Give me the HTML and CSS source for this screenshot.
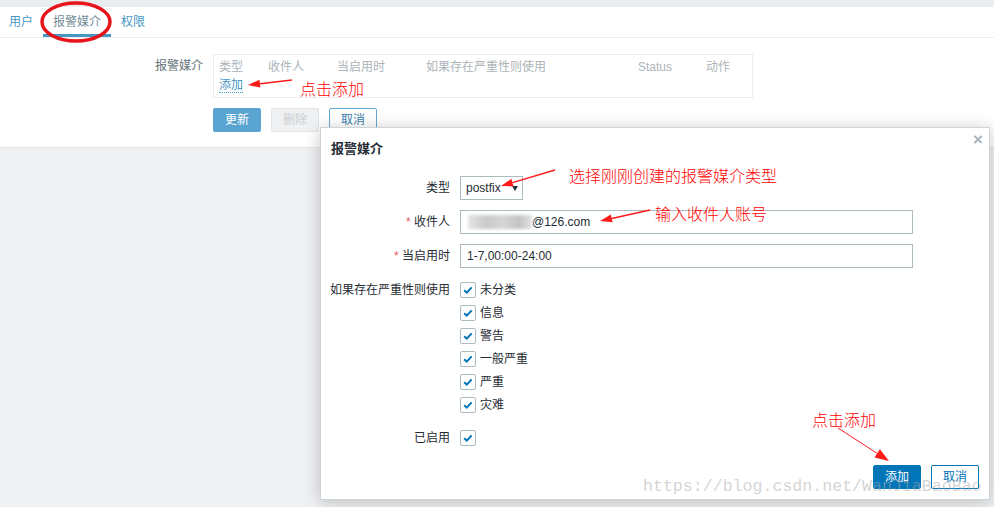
FILE: index.html
```html
<!DOCTYPE html>
<html lang="zh-CN">
<head>
<meta charset="utf-8">
<title>报警媒介</title>
<link rel="stylesheet" href="styles.css">
</head>
<body>
<div class="topbar"></div>
<div class="page">
  <nav class="tabs">
    <a class="tab">用户</a>
    <a class="tab active">报警媒介</a>
    <a class="tab">权限</a>
  </nav>
  <section class="content">
    <div class="form-grid">
      <div class="form-label">报警媒介</div>
      <div class="media-table">
        <div class="media-head">
          <span>类型</span><span>收件人</span><span>当启用时</span><span>如果存在严重性则使用</span><span>Status</span><span>动作</span>
        </div>
        <div class="media-add"><a class="link">添加</a></div>
      </div>
      <div></div>
      <div class="form-actions">
        <span class="btn btn-muted">更新</span>
        <span class="btn btn-disabled">删除</span>
        <span class="btn btn-alt-muted">取消</span>
      </div>
    </div>
  </section>
</div>

<div class="dialog">
  <span class="dialog-close">×</span>
  <h4 class="dialog-title">报警媒介</h4>
  <div class="dialog-form">
    <div class="dlabel">类型</div>
    <div><div class="select"><span>postfix</span><span class="caret"></span></div></div>

    <div class="dlabel"><span class="req">*</span> 收件人</div>
    <div class="input"><span class="blur"></span><span>@126.com</span></div>

    <div class="dlabel"><span class="req">*</span> 当启用时</div>
    <div class="input">1-7,00:00-24:00</div>

    <div class="dlabel dlabel-top">如果存在严重性则使用</div>
    <div class="checklist">
      <div class="check-row"><span class="checkbox"><svg viewBox="0 0 16 16"><path d="M3.6 8.2 L6.6 11 L12.2 5"/></svg></span>未分类</div>
      <div class="check-row"><span class="checkbox"><svg viewBox="0 0 16 16"><path d="M3.6 8.2 L6.6 11 L12.2 5"/></svg></span>信息</div>
      <div class="check-row"><span class="checkbox"><svg viewBox="0 0 16 16"><path d="M3.6 8.2 L6.6 11 L12.2 5"/></svg></span>警告</div>
      <div class="check-row"><span class="checkbox"><svg viewBox="0 0 16 16"><path d="M3.6 8.2 L6.6 11 L12.2 5"/></svg></span>一般严重</div>
      <div class="check-row"><span class="checkbox"><svg viewBox="0 0 16 16"><path d="M3.6 8.2 L6.6 11 L12.2 5"/></svg></span>严重</div>
      <div class="check-row"><span class="checkbox"><svg viewBox="0 0 16 16"><path d="M3.6 8.2 L6.6 11 L12.2 5"/></svg></span>灾难</div>
    </div>

    <div class="dlabel dlabel-enabled">已启用</div>
    <div class="enabled-field"><span class="checkbox"><svg viewBox="0 0 16 16"><path d="M3.6 8.2 L6.6 11 L12.2 5"/></svg></span></div>
  </div>
  <div class="dialog-footer">
    <span class="btn btn-primary">添加</span>
    <span class="btn btn-alt">取消</span>
  </div>
</div>

<svg class="annotations" viewBox="0 0 994 507" width="994" height="507">
  <ellipse cx="76" cy="22" rx="34" ry="19" fill="none" stroke="#e8141b" stroke-width="3.5"/>
  <g stroke="#ff1a1a" stroke-width="1.5" fill="none">
    <line x1="292" y1="80" x2="259.9" y2="83.65"/>
    <line x1="555" y1="170" x2="512.5" y2="182.6"/>
    <line x1="650" y1="210" x2="611.7" y2="218.4"/>
    <line x1="838" y1="428" x2="877.2" y2="453.4" stroke-width="1"/>
  </g>
  <g fill="#ff1a1a">
    <polygon points="248,85 259.45,79.68 260.35,87.62"/>
    <polygon points="501,186 511.4,178.8 513.6,186.4"/>
    <polygon points="600,221 610.8,214.5 612.6,222.3"/>
    <polygon points="889,461 874.5,457.6 879.9,449.2"/>
  </g>
</svg>
<span class="note note-1">点击添加</span>
<span class="note note-2">选择刚刚创建的报警媒介类型</span>
<span class="note note-3">输入收件人账号</span>
<span class="note note-4">点击添加</span>
<div class="watermark">https://blog.csdn.net/WanJiaBaoBao</div>
</body>
</html>
```
FILE: styles.css
```css
* { box-sizing: border-box; }
html, body { margin: 0; height: 100%; }
body {
  background: #f0f1f3;
  font: 12px/16px "Liberation Sans", Arial, "Noto Sans CJK SC", sans-serif;
  color: #1f2c33;
  position: relative;
  overflow: hidden;
}
.topbar { height: 7px; background: #ebeef0; }
.page { background: #fff; border-bottom: 1px solid #e3e7ea; }

.tabs {
  display: flex;
  height: 31px;
  border-bottom: 1px solid #ebeef0;
}
.tab {
  position: relative;
  display: flex;
  align-items: center;
  padding: 0 10px;
  color: #4796c4;
}
.tab:first-child { margin-left: -1px; }
.tab.active { color: #768d99; }
.tab.active::after {
  content: "";
  position: absolute;
  left: 0; right: 0; bottom: 0;
  height: 3px;
  background: #4796c4;
}

.content { padding: 16px 0 15px; }
.form-grid {
  display: grid;
  grid-template-columns: 203px 540px;
  column-gap: 10px;
  row-gap: 10px;
}
.form-label { text-align: right; padding-top: 4px; color: #66747b; }
.media-table {
  border: 1px solid #ebeef0;
  height: 44px;
  padding: 4px 5px 0;
}
.media-head {
  display: grid;
  grid-template-columns: 49px 69px 89px 212px 68px auto;
  color: #acb4b9;
}
.media-add { margin-top: 2px; }
.link { color: #4796c4; border-bottom: 1px dotted #4796c4; }

.form-actions { display: flex; gap: 10px; }
.btn {
  display: inline-flex;
  align-items: center;
  justify-content: center;
  width: 48px;
  height: 24px;
  border: 1px solid;
  border-radius: 2px;
}
.btn-muted { background: #5aa4d1; border-color: #5aa4d1; color: #fff; }
.btn-disabled { background: #f0f1f2; border-color: #e0e4e6; color: #c9cfd2; }
.btn-alt-muted { background: #fff; border-color: #62a8d4; color: #3b80b0; }

.dialog {
  position: absolute;
  left: 320px;
  top: 127px;
  width: 670px;
  height: 373px;
  background: #fff;
  border: 1px solid #cdd4d8;
  box-shadow: 0 2px 16px rgba(0, 0, 0, 0.22);
  display: flex;
  flex-direction: column;
}
.dialog-close {
  position: absolute;
  right: 6px;
  top: 4px;
  color: #aab5bb;
  font-size: 17px;
  font-weight: bold;
  line-height: 16px;
}
.dialog-title {
  margin: 0;
  padding: 12px 10px 0;
  font-size: 13px;
  font-weight: bold;
  line-height: 18px;
}
.dialog-form {
  display: grid;
  grid-template-columns: 120px 453px;
  column-gap: 10px;
  row-gap: 10px;
  padding: 18px 0 0 9px;
}
.dlabel { text-align: right; line-height: 24px; }
.dlabel-top { line-height: 16px; padding-top: 4px; }
.dlabel-enabled { line-height: 16px; padding-top: 7px; }
.req { color: #e45959; }

.select {
  width: 63px;
  height: 24px;
  border: 1px solid #acbbc2;
  padding: 0 4px 0 5px;
  display: flex;
  align-items: center;
  justify-content: space-between;
}
.caret {
  width: 0; height: 0;
  border-left: 3.5px solid transparent;
  border-right: 3.5px solid transparent;
  border-top: 5px solid #1f2c33;
}
.input {
  height: 24px;
  border: 1px solid #acbbc2;
  padding: 0 6px;
  display: flex;
  align-items: center;
}
.blur {
  display: inline-block;
  width: 64px;
  height: 14px;
  margin-left: 1px;
  background: linear-gradient(90deg, #e4e4e4, #c9c9c9 30%, #d6d6d6 55%, #c3c3c3 80%, #e2e2e2);
  filter: blur(1.5px);
}

.checklist {
  display: flex;
  flex-direction: column;
  gap: 7px;
  padding-top: 4px;
}
.check-row { display: flex; align-items: center; gap: 4px; height: 16px; }
.checkbox {
  display: inline-block;
  width: 16px;
  height: 16px;
  border: 1px solid #acbbc2;
  border-radius: 2px;
  background: #fff;
}
.checkbox svg { display: block; width: 14px; height: 14px; }
.checkbox path { fill: none; stroke: #0275b8; stroke-width: 2.3; }
.enabled-field { padding-top: 7px; height: 23px; }

.dialog-footer {
  margin-top: auto;
  display: flex;
  justify-content: flex-end;
  gap: 10px;
  padding: 0 10px 10px;
}
.btn-primary { background: #0275b8; border-color: #0275b8; color: #fff; }
.btn-alt { background: #fff; border-color: #0275b8; color: #0275b8; }

.annotations { position: absolute; left: 0; top: 0; pointer-events: none; }
.note {
  position: absolute;
  color: #ff0000;
  font: 300 16px/16px "Noto Sans CJK SC", sans-serif;
  white-space: nowrap;
}
.note-1 { left: 300px; top: 80px; }
.note-2 { left: 569px; top: 167px; }
.note-3 { left: 655px; top: 205px; }
.note-4 { left: 812px; top: 411px; }
.watermark {
  position: absolute;
  left: 643px;
  top: 479px;
  font: 16.6px/16px "Liberation Mono", monospace;
  color: rgba(170, 170, 170, 0.5);
  white-space: nowrap;
}
```
